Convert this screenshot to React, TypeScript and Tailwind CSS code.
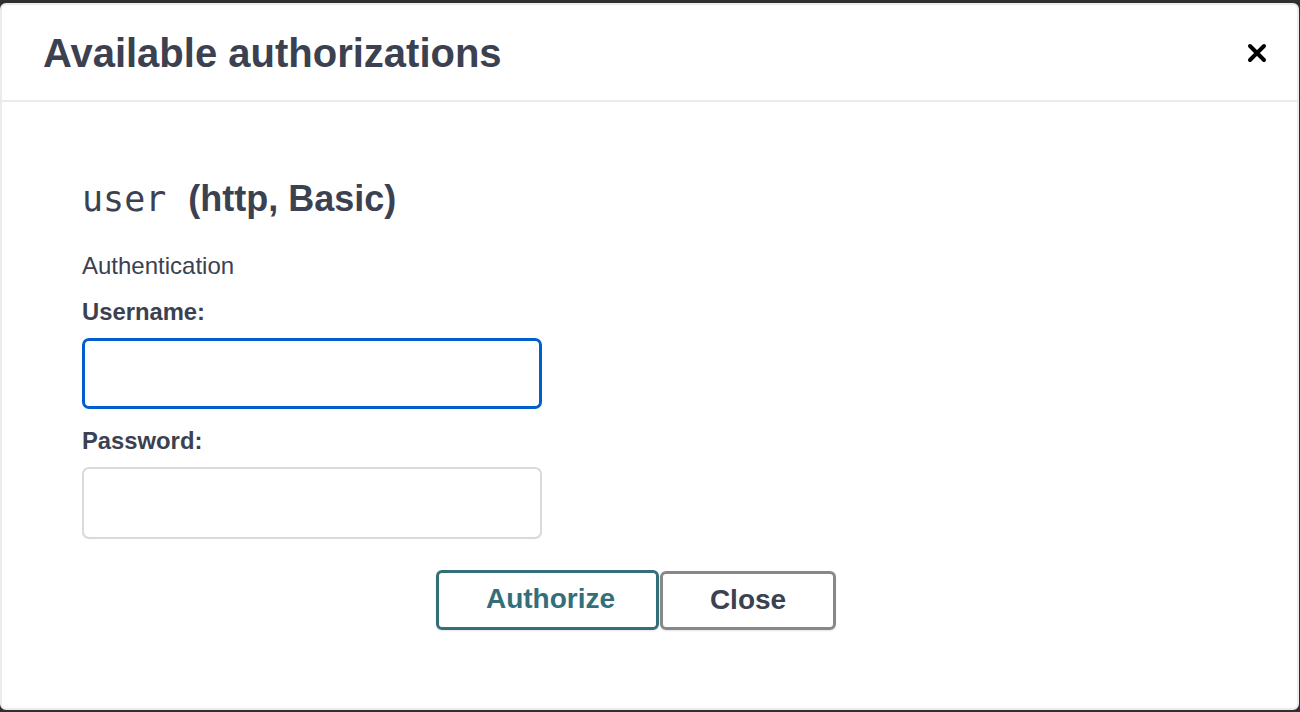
import React from "react";

const sans = { fontFamily: '"Liberation Sans", Arial, sans-serif' };
const mono = { fontFamily: '"DejaVu Sans Mono", monospace' };

export default function App() {
  return (
    <div className="h-[712px] w-[1300px] bg-[#2f2f2f] pt-[3px] pr-[1px] text-[#3b4151]" style={sans}>
      {/* modal */}
      <div className="h-[707px] rounded-[6px] border-2 border-[#ebebeb] bg-white">
        <div className="flex h-[97px] items-center justify-between border-b-2 border-[#ebebeb] pl-[41px] pr-[30px]">
          <h3 className="text-[40px] font-bold leading-[48px]">Available authorizations</h3>
          <button className="flex h-[20px] w-[20px] items-center justify-center" aria-label="close">
            <svg width="20" height="20" viewBox="0 0 20 20">
              <path d="M3 3 L17 17 M17 3 L3 17" stroke="#000" strokeWidth="4" strokeLinecap="round" />
            </svg>
          </button>
        </div>

        <div className="pl-[80px]">
          <h4 className="mt-[76px] flex items-baseline leading-[42px]">
            <code className="text-[35px]" style={mono}>user</code>
            <span className="ml-[22px] text-[36px] font-bold">(http, Basic)</span>
          </h4>

          <p className="mt-[31px] text-[24px] leading-[30px]">Authentication</p>

          <label className="mt-[16px] block text-[23.8px] font-bold leading-[30px]">Username:</label>
          <input
            className="mt-[11px] block h-[71px] w-[460px] rounded-[7px] border-[3px] border-[#005fcc] bg-white outline-none"
            type="text"
          />

          <label className="mt-[17px] block text-[23.8px] font-bold leading-[30px]">Password:</label>
          <input
            className="mt-[11px] block h-[72px] w-[460px] rounded-[7px] border-2 border-[#d9d9d9] bg-white outline-none"
            type="password"
          />
        </div>

        <div className="mt-[31px] flex items-start pl-[434px]">
          <button className="h-[60px] w-[223px] rounded-[6px] border-[3px] border-[#336e79] pb-[3px] pl-[6px] text-[28px] font-bold text-[#336e79] shadow-[0_1px_2px_rgba(0,0,0,0.1)]">
            Authorize
          </button>
          <button className="mt-[1px] ml-[1px] h-[59px] w-[176px] rounded-[6px] border-[3px] border-[#888888] pb-[2px] text-[28px] font-bold text-[#3b4151] shadow-[0_1px_2px_rgba(0,0,0,0.1)]">
            Close
          </button>
        </div>
      </div>
    </div>
  );
}
